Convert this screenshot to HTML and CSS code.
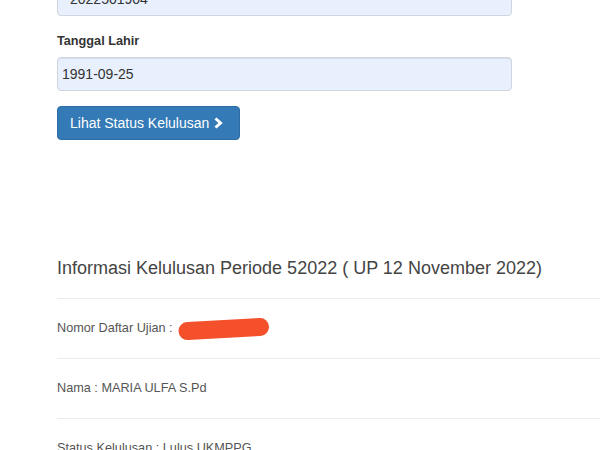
FILE: index.html
```html
<!DOCTYPE html>
<html lang="id">
<head>
<meta charset="utf-8">
<title>Informasi Kelulusan</title>
<link rel="stylesheet" href="styles.css">
</head>
<body>
<div class="page">
  <form class="form">
    <div class="group">
      <input class="field field-wide" type="text" value="2022501904">
    </div>
    <div class="group">
      <label class="label">Tanggal Lahir</label>
      <input class="field field-tight" type="text" value="1991-09-25">
    </div>
    <button class="btn" type="button">Lihat Status Kelulusan<svg class="chev" width="14" height="12" viewBox="0 0 14 12"><polyline points="2.5,1.5 7.5,6 2.5,10.5" fill="none" stroke="#fff" stroke-width="3"/></svg></button>
  </form>
  <section class="info">
    <h4 class="info-title">Informasi Kelulusan Periode 52022 ( UP 12 November 2022)</h4>
    <div class="row"><span>Nomor Daftar Ujian :</span><svg class="redact" width="92" height="22" viewBox="0 0 92 22"><line x1="9.5" y1="13" x2="82" y2="9" stroke="#f4502b" stroke-width="18" stroke-linecap="round"/></svg></div>
    <div class="row"><span>Nama : MARIA ULFA S.Pd</span></div>
    <div class="row"><span>Status Kelulusan : Lulus UKMPPG</span></div>
  </section>
</div>
</body>
</html>
```

FILE: styles.css
```css
html {
  overflow: hidden;
}

body {
  margin: 0;
  background: #ffffff;
  font-family: "Liberation Sans", Arial, sans-serif;
  color: #333333;
}

.page {
  padding-left: 57px;
}

.form {
  margin-top: -18px;
  width: 455px;
}

.group {
  margin-bottom: 15px;
}

.label {
  display: block;
  font-size: 12.7px;
  font-weight: 700;
  line-height: 20px;
  margin-bottom: 6px;
  color: #333333;
}

.field {
  display: block;
  box-sizing: border-box;
  width: 455px;
  height: 34px;
  margin: 0;
  border: 1px solid #cfd5df;
  border-radius: 4px;
  background: #e8f0fe;
  box-shadow: inset 0 1px 1px rgba(0, 0, 0, 0.075);
  font-family: "Liberation Sans", Arial, sans-serif;
  font-size: 14px;
  color: #333333;
  outline: none;
}

.field-wide {
  padding: 0 12px;
}

.field-tight {
  padding: 0 4px;
}

.btn {
  display: inline-flex;
  align-items: center;
  box-sizing: border-box;
  height: 34px;
  margin: 0;
  padding: 6px 12px;
  border: 1px solid #2e6da4;
  border-radius: 4px;
  background: #337ab7;
  color: #ffffff;
  font-family: "Liberation Sans", Arial, sans-serif;
  font-size: 14px;
  line-height: 20px;
}

.chev {
  margin-left: 4px;
}

.info-title {
  margin: 119px 0 19px;
  font-size: 18px;
  font-weight: 400;
  line-height: 19.8px;
  color: #444444;
  white-space: nowrap;
}

.row {
  display: flex;
  align-items: center;
  gap: 5px;
  height: 59px;
  border-top: 1px solid #ececec;
  font-size: 12.7px;
  line-height: 20px;
  color: #555555;
}

.redact {
  display: block;
  margin-top: 2px;
}
```
